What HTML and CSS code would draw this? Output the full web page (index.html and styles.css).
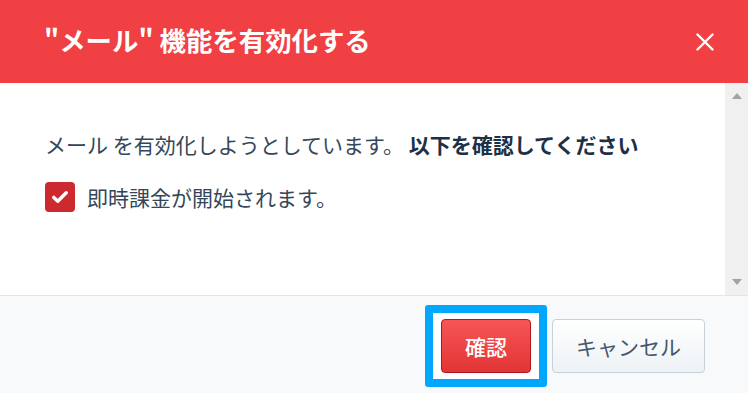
FILE: index.html
```html
<!DOCTYPE html>
<html lang="ja">
<head>
<meta charset="utf-8">
<link rel="stylesheet" href="styles.css">
</head>
<body>
<div class="dialog">
  <header class="dialog-header">
    <h1 class="dialog-title">"メール" 機能を有効化する</h1>
    <button class="close-btn" aria-label="閉じる">
      <svg width="18" height="18" viewBox="0 0 18 18"><path d="M1.5 1.5 L16.5 16.5 M16.5 1.5 L1.5 16.5" stroke="#fff" stroke-width="2.4" stroke-linecap="round"/></svg>
    </button>
  </header>
  <div class="dialog-body">
    <div class="content">
      <p class="lead">メール を有効化しようとしています。 <strong>以下を確認してください</strong></p>
      <label class="check-row">
        <span class="checkbox">
          <svg width="16" height="14" viewBox="0 0 16 14"><path d="M1.8 7.4 L5.8 11.2 L14.2 2.8" fill="none" stroke="#fff" stroke-width="3.4" stroke-linecap="round" stroke-linejoin="round"/></svg>
        </span>
        <span class="check-label">即時課金が開始されます。</span>
      </label>
    </div>
    <div class="scrollbar">
      <span class="arrow-up"></span>
      <span class="arrow-down"></span>
    </div>
  </div>
  <footer class="dialog-footer">
    <span class="focus-ring"><button class="btn btn-primary">確認</button></span>
    <button class="btn btn-cancel">キャンセル</button>
  </footer>
</div>
</body>
</html>
```
FILE: styles.css
```css
html, body {
  margin: 0;
  padding: 0;
  background: #fff;
}
body {
  font-family: "Noto Sans CJK JP", "Noto Sans", sans-serif;
  width: 748px;
  height: 393px;
  overflow: hidden;
}
.dialog {
  display: flex;
  flex-direction: column;
  height: 393px;
}
.dialog-header {
  height: 83px;
  flex: none;
  background: #f04043;
  display: flex;
  align-items: center;
  justify-content: space-between;
  padding: 0 34px 0 44px;
  box-sizing: border-box;
}
.dialog-title {
  margin: 0;
  color: #fff;
  font-size: 26.4px;
  font-weight: 700;
  line-height: 1;
  padding-bottom: 2px;
}
.close-btn {
  background: none;
  border: 0;
  padding: 0;
  width: 18px;
  height: 18px;
  display: flex;
  cursor: pointer;
}
.dialog-body {
  flex: none;
  height: 212px;
  display: flex;
  border-bottom: 1px solid #dfe5eb;
}
.content {
  flex: 1;
  padding: 46px 0 0 45px;
}
.lead {
  margin: 0;
  font-size: 21px;
  line-height: 30px;
  color: #34475a;
}
.lead strong {
  font-weight: 700;
  color: #1d3146;
}
.check-row {
  display: flex;
  align-items: center;
  gap: 12px;
  margin-top: 23px;
}
.checkbox {
  width: 30px;
  height: 30px;
  border-radius: 4px;
  background: #cc2a2f;
  display: flex;
  align-items: center;
  justify-content: center;
}
.check-label {
  font-size: 21px;
  line-height: 30px;
  color: #34475a;
}
.scrollbar {
  width: 23px;
  flex: none;
  background: #f0f0f0;
  display: flex;
  flex-direction: column;
  justify-content: space-between;
  align-items: center;
  padding: 10px 0 10px;
  box-sizing: border-box;
}
.arrow-up {
  width: 0;
  height: 0;
  border-left: 5.5px solid transparent;
  border-right: 5.5px solid transparent;
  border-bottom: 6px solid #a3a3a3;
}
.arrow-down {
  width: 0;
  height: 0;
  border-left: 5.5px solid transparent;
  border-right: 5.5px solid transparent;
  border-top: 6px solid #a3a3a3;
}
.dialog-footer {
  flex: 1;
  background: #f8f9fb;
  display: flex;
  justify-content: flex-end;
  align-items: flex-start;
  gap: 5px;
  padding: 9px 43px 0 0;
}
.focus-ring {
  display: flex;
  border: 8px solid #00a7fd;
  border-radius: 3px;
  background: #fff;
  padding: 6px 8px;
}
.btn {
  height: 54px;
  font-family: inherit;
  font-size: 21px;
  line-height: 1;
  border-radius: 4px;
  cursor: pointer;
  box-sizing: border-box;
}
.btn-primary {
  width: 90px;
  color: #fff;
  background: linear-gradient(#f75555, #e23535);
  border: 1px solid #b2161c;
  font-weight: 500;
}
.btn-cancel {
  width: 153px;
  margin-top: 14px;
  color: #44576a;
  background: linear-gradient(#ffffff, #edf2f5);
  border: 1px solid #c6d1da;
}
```
